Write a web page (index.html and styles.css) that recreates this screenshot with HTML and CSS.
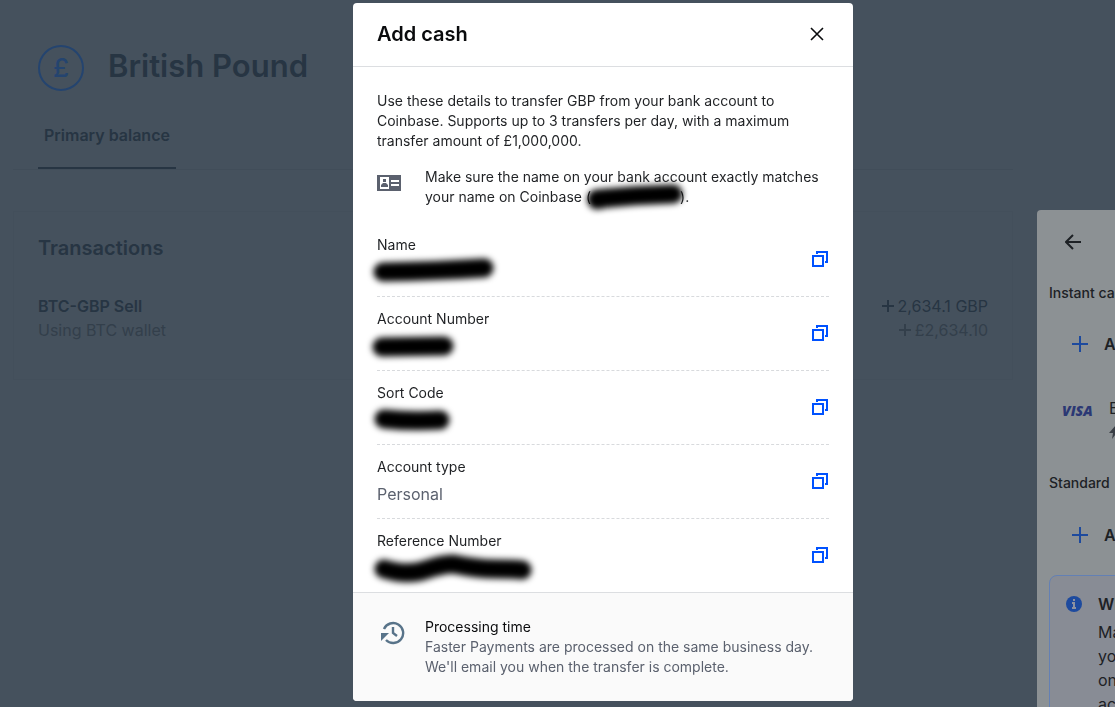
FILE: index.html
```html
<!DOCTYPE html>
<html lang="en">
<head>
  <meta charset="utf-8">
  <title>British Pound</title>
  <link rel="stylesheet" href="styles.css">
</head>
<body>
  <main class="page">
    <header class="wallet-header">
      <span class="currency-icon">£</span>
      <h1>British Pound</h1>
    </header>
    <nav class="tabs">
      <a href="#" class="tab active">Primary balance</a>
    </nav>
    <section class="card">
      <h2>Transactions</h2>
      <div class="transaction">
        <div>
          <div class="transaction-title">BTC-GBP Sell</div>
          <div class="muted">Using BTC wallet</div>
        </div>
        <div class="transaction-amount">
          <div><svg class="plus-sm" viewBox="0 0 12 12"><path d="M6 0v12M0 6h12"/></svg>2,634.1 GBP</div>
          <div class="muted"><svg class="plus-sm" viewBox="0 0 12 12"><path d="M6 0v12M0 6h12"/></svg>£2,634.10</div>
        </div>
      </div>
    </section>
  </main>

  <aside class="panel">
    <button class="icon-btn back" type="button" aria-label="Back">
      <svg width="16" height="16" viewBox="0 0 16 16"><path d="M16 8H1M8 1L1 8l7 7"/></svg>
    </button>
    <h3>Instant cash</h3>
    <button class="method" type="button">
      <svg class="plus" width="16" height="16" viewBox="0 0 16 16"><path d="M8 0v16M0 8h16"/></svg>
      Add a debit card
    </button>
    <div class="method card-method">
      <span class="visa">VISA</span>
      <div class="card-text">
        <div>Bank card</div>
        <svg width="10" height="14" viewBox="0 0 10 14"><path d="M7 0L0 8h4l-1 6 7-9H6z"/></svg>
      </div>
    </div>
    <h3 class="standard">Standard</h3>
    <button class="method" type="button">
      <svg class="plus" width="16" height="16" viewBox="0 0 16 16"><path d="M8 0v16M0 8h16"/></svg>
      Add a bank account
    </button>
    <div class="info">
      <svg width="16" height="16" viewBox="0 0 16 16">
        <circle cx="8" cy="8" r="8" fill="#1d4a9e"/>
        <path d="M7 3h2v2H7zM6 6h3v5h1v2H6v-2h1V8H6z" fill="#8c91a0"/>
      </svg>
      <div>
        <strong>Why</strong>
        <p>Many<br>you<br>on<br>account</p>
      </div>
    </div>
  </aside>

  <div class="overlay">
    <div class="modal" role="dialog" aria-labelledby="modal-title">
      <header class="modal-header">
        <h2 id="modal-title">Add cash</h2>
        <button class="icon-btn close" type="button" aria-label="Close">
          <svg width="14" height="14" viewBox="0 0 14 14"><path d="M1 1l12 12M13 1L1 13"/></svg>
        </button>
      </header>

      <div class="modal-body">
        <p>Use these details to transfer GBP from your bank account to Coinbase. Supports up to 3 transfers per day, with a maximum transfer amount of £1,000,000.</p>
        <div class="notice">
          <svg class="notice-icon" width="24" height="24" viewBox="0 0 24 24">
            <path d="M0 4h24v16H0z" fill="#5b616e"/>
            <path d="M3 6h9v12H3zM14 9h8v2h-8zM14 13h8v2h-8z" fill="#fff"/>
            <path d="M6 8h3v3H6zM4 16v-2l2-2h3l2 2v2z" fill="#5b616e"/>
          </svg>
          <p>Make sure the name on your bank account exactly matches your name on Coinbase (<svg class="redacted inline" width="91" height="20"><path d="M8 13L14 12" stroke-width="19"/><path d="M8 12Q46 8 84 7"/></svg>).</p>
        </div>

        <dl class="details">
          <div class="detail">
            <div>
              <dt>Name</dt>
              <dd><svg class="redacted" width="116" height="24"><path d="M6 12Q60 11 107 8"/></svg></dd>
            </div>
            <button class="icon-btn copy" type="button" aria-label="Copy name">
              <svg width="16" height="16" viewBox="0 0 16 16"><path d="M1 5h10v10H1zM5 3V1h10v10h-2"/></svg>
            </button>
          </div>
          <div class="detail">
            <div>
              <dt>Account Number</dt>
              <dd><svg class="redacted" width="80" height="24"><path d="M5 13L67 12"/></svg></dd>
            </div>
            <button class="icon-btn copy" type="button" aria-label="Copy account number">
              <svg width="16" height="16" viewBox="0 0 16 16"><path d="M1 5h10v10H1zM5 3V1h10v10h-2"/></svg>
            </button>
          </div>
          <div class="detail">
            <div>
              <dt>Sort Code</dt>
              <dd><svg class="redacted" width="80" height="24"><path d="M7 11Q35 14 63 12"/></svg></dd>
            </div>
            <button class="icon-btn copy" type="button" aria-label="Copy sort code">
              <svg width="16" height="16" viewBox="0 0 16 16"><path d="M1 5h10v10H1zM5 3V1h10v10h-2"/></svg>
            </button>
          </div>
          <div class="detail">
            <div>
              <dt>Account type</dt>
              <dd>Personal</dd>
            </div>
            <button class="icon-btn copy" type="button" aria-label="Copy account type">
              <svg width="16" height="16" viewBox="0 0 16 16"><path d="M1 5h10v10H1zM5 3V1h10v10h-2"/></svg>
            </button>
          </div>
          <div class="detail">
            <div>
              <dt>Reference Number</dt>
              <dd><svg class="redacted" width="150" height="24"><path d="M7 13Q30 20 48 14T76 8Q100 13 118 13T145 14"/></svg></dd>
            </div>
            <button class="icon-btn copy" type="button" aria-label="Copy reference number">
              <svg width="16" height="16" viewBox="0 0 16 16"><path d="M1 5h10v10H1zM5 3V1h10v10h-2"/></svg>
            </button>
          </div>
        </dl>
      </div>

      <footer class="modal-footer">
        <svg class="clock" width="24" height="24" viewBox="0 0 24 24">
          <path d="M3 8A10 10 0 1 1 5 19M12 6v6l4 3" fill="none" stroke="#587389" stroke-width="2.4"/>
          <path d="M0 12h8l-2.500 2.500L3 17l-3 3z" fill="#587389"/>
        </svg>
        <div>
          <div class="footer-title">Processing time</div>
          <p>Faster Payments are processed on the same business day. We'll email you when the transfer is complete.</p>
        </div>
      </footer>
    </div>
  </div>
</body>
</html>
```
FILE: styles.css
```css
* {
  box-sizing: border-box;
}
body {
  margin: 0;
  min-height: 100vh;
  overflow: hidden;
  background-color: #45515d;
  color: #273543;
  font-family: Inter, "Liberation Sans", sans-serif;
  font-size: 16px;
  line-height: 24px;
}
h1, h2, h3, p, dl, dd {
  margin: 0;
}
button {
  font: inherit;
  color: inherit;
  background: none;
  border: 0;
  padding: 0;
  cursor: pointer;
}
svg {
  display: block;
  flex: none;
}

/* wallet page */
.page {
  margin: 0 102px 0 13px;
  padding-top: 45px;
}
.wallet-header {
  display: flex;
  align-items: flex-start;
  gap: 24px;
  padding: 0 25px;
}
.currency-icon {
  width: 46px;
  height: 46px;
  border: 2px solid #24446f;
  border-radius: 50%;
  color: #24446f;
  font-size: 26px;
  font-weight: 500;
  line-height: 42px;
  text-align: center;
}
.wallet-header h1 {
  font-size: 31px;
  font-weight: 600;
  line-height: 42px;
}
.tabs {
  display: flex;
  margin-top: 32px;
  padding: 0 25px;
  border-bottom: 1px solid #414d59;
}
.tab {
  padding: 0 6px 20px;
  border-bottom: 2px solid #273543;
  color: inherit;
  font-weight: 600;
  text-decoration: none;
}
.card {
  margin-top: 41px;
  padding: 24px 24px 37px;
  border: 1px solid #434f5b;
}
.card h2 {
  font-size: 20px;
  font-weight: 600;
}
.transaction {
  display: flex;
  justify-content: space-between;
  margin-top: 34px;
}
.transaction-title {
  font-weight: 600;
}
.transaction-amount {
  text-align: right;
}
.muted {
  color: #333f4b;
}
.plus-sm {
  display: inline-block;
  width: 12px;
  height: 12px;
  margin-right: 4px;
  fill: none;
  stroke: currentColor;
  stroke-width: 2;
}

/* cash out panel, runs off the right edge */
.panel {
  position: fixed;
  top: 210px;
  right: -322px;
  bottom: 0;
  width: 400px;
  padding: 24px 12px 0;
  overflow: hidden;
  border-radius: 4px 4px 0 0;
  background-color: #8c9194;
  color: #1d2125;
}
.icon-btn {
  display: block;
}
.icon-btn svg {
  fill: none;
  stroke: currentColor;
  stroke-width: 2;
}
.back {
  margin-left: 16px;
}
.panel h3 {
  margin-top: 33px;
  font-size: 14px;
  font-weight: 500;
  line-height: 20px;
}
.method {
  display: flex;
  align-items: center;
  gap: 16px;
  width: 100%;
  margin-top: 29px;
  padding-left: 23px;
  font-weight: 600;
}
.plus {
  fill: none;
  stroke: #1d4a9e;
  stroke-width: 2;
}
.card-method {
  align-items: flex-start;
  gap: 14px;
  margin-top: 40px;
  padding-left: 13px;
  font-weight: 400;
}
.visa {
  width: 33px;
  margin-top: 3px;
  color: #2b3874;
  font-family: "Open Sans", sans-serif;
  font-size: 14px;
  font-style: italic;
  font-weight: 800;
}
.card-text svg {
  margin-top: 5px;
  fill: #3a3f46;
}
.panel .standard {
  margin-top: 34px;
}
.panel .standard + .method {
  margin-top: 30px;
}
.info {
  display: flex;
  gap: 16px;
  margin-top: 28px;
  padding: 16px;
  height: 200px;
  border: 1px solid #6380b4;
  border-radius: 8px;
  background-color: #888c95;
}
.info svg {
  margin-top: 4px;
}
.info strong {
  font-weight: 600;
}
.info p {
  margin-top: 4px;
}

/* modal */
.overlay {
  position: fixed;
  inset: 0;
  display: flex;
  align-items: flex-start;
  justify-content: center;
  padding: 3px 0 0 91px;
}
.modal {
  width: 500px;
  overflow: hidden;
  border-radius: 4px;
  background-color: #fff;
  color: #1f2124;
  font-size: 14px;
  line-height: 20px;
}
.modal-header {
  display: flex;
  align-items: center;
  justify-content: space-between;
  padding: 19px 29px 20px 24px;
  border-bottom: 1px solid #dcdee1;
  color: #0a0b0d;
}
.modal-header h2 {
  font-size: 20px;
  font-weight: 600;
  line-height: 24px;
}
.close svg {
  stroke-width: 1.6;
}
.modal-body {
  padding: 24px 24px 0;
}
.notice {
  display: flex;
  gap: 24px;
  margin: 16px 0;
}
.notice-icon {
  margin-top: 4px;
}
.detail {
  display: flex;
  align-items: flex-start;
  justify-content: space-between;
  padding: 12px 1px 12px 0;
  border-bottom: 1px dashed #d8dadd;
}
.detail:last-child {
  border-bottom-color: transparent;
  margin-bottom: -1px;
}
.detail dd {
  height: 24px;
  margin-top: 5px;
  color: #5b616e;
  font-size: 16px;
  line-height: 24px;
}
.copy {
  margin-top: 16px;
  color: #0052ff;
}
.redacted {
  overflow: visible;
  fill: none;
  stroke: #000;
  stroke-width: 19;
  stroke-linecap: round;
  stroke-linejoin: round;
  filter: blur(3px);
}
.redacted.inline {
  display: inline-block;
  margin-left: -2px;
  vertical-align: top;
}
.modal-footer {
  display: flex;
  gap: 20px;
  padding: 24px;
  border-top: 1px solid #dcdee1;
  background-color: #fafafa;
  color: #5b616e;
}
.clock {
  margin: 4px 0 0 4px;
}
.footer-title {
  color: #0a0b0d;
}
```
